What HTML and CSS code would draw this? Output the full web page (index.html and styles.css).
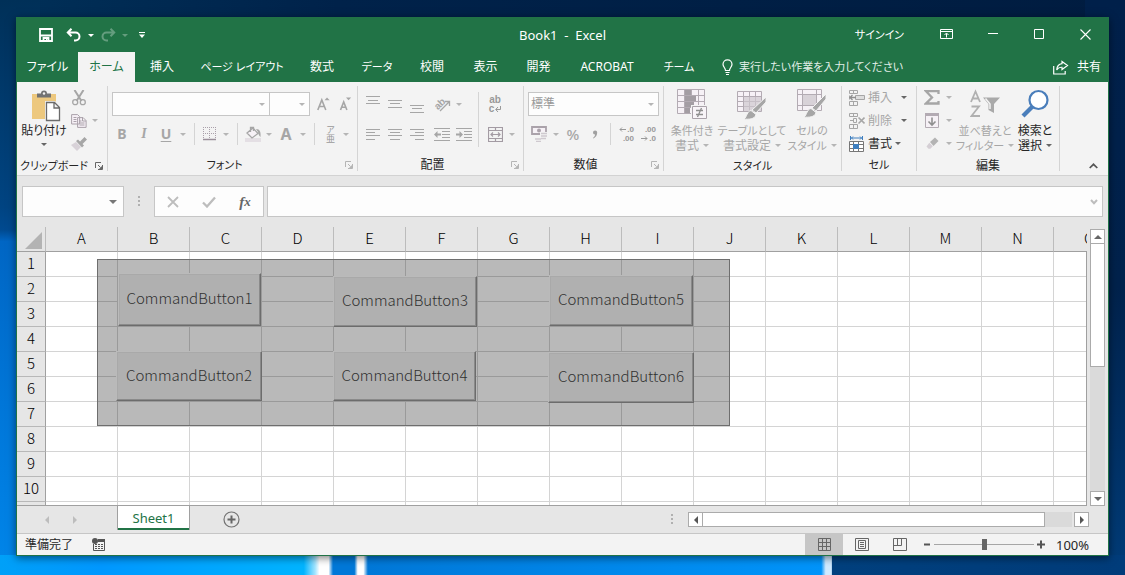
FILE: index.html
```html
<!DOCTYPE html>
<html lang="ja">
<head>
<meta charset="utf-8">
<title>Book1 - Excel</title>
<link rel="stylesheet" href="styles.css">
</head>
<body>
<div class="desktop">
<main class="window">
  <header class="titlebar">
    <div class="qat">
      <button class="qat-btn" aria-label="上書き保存"><svg width="14" height="14" viewBox="0 0 14 14"><path d="M1 1h12v12H1zM1 7.500h12M4.500 13v-3h5v3" fill="none" stroke="#fff" stroke-width="1.800"/><path d="M7 11h1.500v2H7z" fill="#fff"/></svg></button>
      <button class="qat-btn undo" aria-label="元に戻す"><svg width="16" height="14" viewBox="0 0 16 14"><path d="M2 4.500h7.500a4 4 0 0 1 0 8H8M5.500 .8 1.800 4.500l3.700 3.700" fill="none" stroke="#fff" stroke-width="2"/></svg></button>
      <button class="caret white" aria-label="元に戻すの一覧"></button>
      <button class="qat-btn faded" aria-label="やり直し"><svg width="16" height="14" viewBox="0 0 16 14"><path d="M14 4.500H6.500a4 4 0 0 0 0 8H8M10.500 .8l3.700 3.700-3.700 3.700" fill="none" stroke="#fff" stroke-width="2"/></svg></button>
      <button class="caret white faded" aria-label="やり直しの一覧"></button>
      <button class="qat-btn" aria-label="クイック アクセスのカスタマイズ"><svg width="6" height="6" viewBox="0 0 6 6"><path d="M0 .5h6" stroke="#fff"/><path d="M0 2.500h6L3 6z" fill="#fff"/></svg></button>
    </div>
    <h1 class="doc-title">Book1  -  Excel</h1>
    <div class="win-controls">
      <button class="signin kana">サインイン</button>
      <button class="win-btn" aria-label="リボンの表示オプション"><svg width="14" height="12" viewBox="0 0 14 12"><path d="M.5 1.500h12v9H.5zM.5 3.500h12M6.500 9.500v-4M4.500 7l2-2 2 2" fill="none" stroke="#fff"/></svg></button>
      <button class="win-btn" aria-label="最小化"><svg width="10" height="11" viewBox="0 0 10 11"><path d="M0 4.500h10" stroke="#fff"/></svg></button>
      <button class="win-btn" aria-label="最大化"><svg width="10" height="10" viewBox="0 0 10 10"><path d="M.5.5h9v9h-9z" fill="none" stroke="#fff"/></svg></button>
      <button class="win-btn" aria-label="閉じる"><svg width="11" height="11" viewBox="0 0 11 11"><path d="m.5.5 10 10M10.500.5l-10 10" stroke="#fff" stroke-width="1.100"/></svg></button>
    </div>
  </header>

  <nav class="tabs">
    <div class="tablist">
      <button class="tab">ファイル</button>
      <button class="tab active">ホーム</button>
      <button class="tab">挿入</button>
      <button class="tab kana">ページ レイアウト</button>
      <button class="tab">数式</button>
      <button class="tab kana">データ</button>
      <button class="tab">校閲</button>
      <button class="tab">表示</button>
      <button class="tab">開発</button>
      <button class="tab">ACROBAT</button>
      <button class="tab kana">チーム</button>
    </div>
    <button class="tellme kana"><svg width="11" height="17" viewBox="0 0 11 17"><path d="M3.500 11.500C3.500 9 1 8 1 5.300a4.500 4.500 0 0 1 9 0C10 8 7.500 9 7.500 11.500zM3.500 13.500h4M4 15.500h3" fill="none" stroke="#fff" stroke-width="1.200"/></svg>実行したい作業を入力してください</button>
    <button class="share"><svg width="16" height="15" viewBox="0 0 16 15"><path d="M.7 6v8h11.500v-3M9 1.500l5.500 4L9 9.500V7.300C6.500 7 5 8 3.700 10 4 6 6 4 9 3.700z" fill="none" stroke="#fff" stroke-width="1.200"/></svg>共有</button>
  </nav>

  <section class="ribbon">
    <div class="group clipboard">
      <div class="group-body">
        <button class="big on"><svg width="30" height="32" viewBox="0 0 30 32"><path d="M1 4h24v25H1z" fill="#edc87e"/><path d="M6 3.500h4a3 3 0 0 1 6 0h4v4H6z" fill="#737373"/><circle cx="13" cy="3.500" r="1.200" fill="#f3f3f3"/><path d="M14 11h10l5 5.500V31H14z" fill="#f3f3f3"/><path d="M15.500 12.500h8l5 5V30.500h-13zM23 12.500v5.500h5" fill="#fff" stroke="#6b6b6b" stroke-width="1.300"/></svg><span>貼り付け</span><i class="arrow"></i></button>
        <div class="stack">
          <div class="srow"><button class="tool" aria-label="切り取り"><svg width="14" height="16" viewBox="0 0 14 16"><path d="m2.500 0 7 11M11.500 0l-7 11" stroke="#a6a6a6" stroke-width="2"/><circle cx="3.200" cy="12.200" r="2.500" fill="none" stroke="#a6a6a6" stroke-width="1.300"/><circle cx="10.800" cy="12.200" r="2.500" fill="none" stroke="#a6a6a6" stroke-width="1.300"/></svg></button></div>
          <div class="srow"><button class="tool" aria-label="コピー"><svg width="16" height="14" viewBox="0 0 16 14"><path d="M.6.6h6l2 2V10h-8zM6.600 3.600h5.500l3 3v6.800H6.600zM11.500 3.600V7H15M2.500 3.500h3M2.500 5.500h3M2.500 7.500h3M8.500 7h2M8.500 9h5M8.500 11h5" fill="#f6f0f6" stroke="#aaa2aa"/></svg></button><button class="caret" aria-label="コピーの一覧"></button></div>
          <div class="srow"><button class="tool" aria-label="書式のコピー"><svg width="16" height="14" viewBox="0 0 16 14"><path d="m0 8 5-3 5 5-4 4z" fill="#d8d2d8"/><path d="m5 4 2-1.500 6 6L11 10.500zM9 4.500 13.500 0l2.500 2.500L11.500 7z" fill="#a6a6a6"/></svg></button></div>
        </div>
      </div>
      <div class="group-foot"><h2 class="kana">クリップボード</h2><button class="launch on" aria-label="クリップボードの詳細"><svg width="8" height="8" viewBox="0 0 8 8"><path d="M.5 6V.5H6M3 3l2.500 2.500M7.500 3v4.500H3" fill="none" stroke="currentColor"/><path d="M7 4v3H4z" fill="currentColor"/></svg></button></div>
    </div>

    <div class="group font">
      <div class="group-body col">
        <div class="trow combos">
          <span class="combo grow"><select aria-label="フォント" disabled><option></option></select></span><span class="combo size"><select aria-label="フォント サイズ" disabled><option></option></select></span>
          <button class="tool lead" aria-label="フォント サイズの拡大"><svg width="13" height="14" viewBox="0 0 13 14"><path d="m.8 13 4-10 4 10M2.200 9.500h5.200" fill="none" stroke="#a6a6a6" stroke-width="1.600"/><path d="M7.500 3.200h5.200L10 .5z" fill="#a6a6a6"/></svg></button>
          <button class="tool" aria-label="フォント サイズの縮小"><svg width="13" height="14" viewBox="0 0 13 14"><path d="m1.500 13 3.200-8 3.200 8M2.800 10.200h4" fill="none" stroke="#a6a6a6" stroke-width="1.600"/><path d="M7 .5h5.200L9.500 3.200z" fill="#a6a6a6"/></svg></button>
        </div>
        <div class="trow">
          <button class="tool letter bold">B</button><button class="tool letter italic">I</button><button class="tool letter under">U</button><button class="caret" aria-label="下線の種類"></button>
          <i class="sep"></i>
          <button class="tool narrow" aria-label="罫線"><svg width="14" height="14" viewBox="0 0 14 14"><path d="M.5 0v12M6.500 0v12M12.500 0v12M0 .5h13M0 6.500h13" stroke="#aaa0aa" stroke-dasharray="1 1"/><path d="M0 12.500h13" stroke="#9b909b" stroke-width="1.500"/></svg></button><button class="caret" aria-label="罫線の種類"></button>
          <i class="sep"></i>
          <button class="tool narrow" aria-label="塗りつぶしの色"><svg width="17" height="16" viewBox="0 0 17 16"><path d="M0 12h16v4H0z" fill="#e4dfe4"/><path d="m2 7 6-5 5 5.500-6 4.500zM5.500 6V1.500h3V5" fill="#f6f1f6" stroke="#a6a6a6" stroke-width="1.300"/><path d="M11 3c4 0 5 3 4.500 8C14 10 13.500 8 13 6z" fill="#a6a6a6"/></svg></button><button class="caret" aria-label="塗りつぶしの色の一覧"></button>
          <button class="tool letter fontcolor">A</button><button class="caret" aria-label="フォントの色の一覧"></button>
          <i class="sep"></i>
          <button class="tool narrow" aria-label="ふりがな"><span class="ruby">ア亜</span></button><button class="caret" aria-label="ふりがなの一覧"></button>
        </div>
      </div>
      <div class="group-foot"><h2 class="kana">フォント</h2><button class="launch" aria-label="フォントの詳細"><svg width="8" height="8" viewBox="0 0 8 8"><path d="M.5 6V.5H6M3 3l2.500 2.500M7.500 3v4.500H3" fill="none" stroke="currentColor"/><path d="M7 4v3H4z" fill="currentColor"/></svg></button></div>
    </div>

    <div class="group align">
      <div class="group-body">
        <div class="col">
          <div class="trow">
            <button class="tool" aria-label="上揃え"><svg width="14" height="18" viewBox="0 0 14 18"><path d="M0 1.500h14M2 5.500h10M0 8.500h14" stroke="#a6a6a6"/></svg></button><button class="tool" aria-label="上下中央揃え"><svg width="14" height="18" viewBox="0 0 14 18"><path d="M0 5.500h14M2 8.500h10M0 12.500h14" stroke="#a6a6a6"/></svg></button><button class="tool" aria-label="下揃え"><svg width="14" height="18" viewBox="0 0 14 18"><path d="M0 10.500h14M2 13.500h10M0 17.500h14" stroke="#a6a6a6"/></svg></button>
            <button class="tool shift" aria-label="方向"><svg class="orient" width="17" height="16" viewBox="0 0 17 16"><text class="ab-text" x="0" y="11" transform="rotate(-45 6 8)">ab</text><path d="m6 15 9-9M11 5.500h4.500V10" fill="none" stroke="#a6a6a6" stroke-width="1.300"/></svg></button><button class="caret" aria-label="方向の一覧"></button>
          </div>
          <div class="trow">
            <button class="tool" aria-label="左揃え"><svg width="14" height="12" viewBox="0 0 14 12"><path d="M0 1.500h14M0 4.500h9M0 7.500h14M0 11.500h9" stroke="#a6a6a6"/></svg></button><button class="tool" aria-label="中央揃え"><svg width="14" height="12" viewBox="0 0 14 12"><path d="M0 1.500h14M2 4.500h10M0 7.500h14M2 11.500h10" stroke="#a6a6a6"/></svg></button><button class="tool" aria-label="右揃え"><svg width="14" height="12" viewBox="0 0 14 12"><path d="M0 1.500h14M5 4.500h9M0 7.500h14M5 11.500h9" stroke="#a6a6a6"/></svg></button>
            <button class="tool shift" aria-label="インデントを減らす"><svg width="16" height="13" viewBox="0 0 16 13"><path d="M0 .5h16M8 3.500h8M8 6.500h8M8 9.500h8M0 12.500h16" stroke="#a6a6a6"/><path d="m0 6.500 3.500-3.500v2.500H7v2H3.500V10z" fill="#a6a6a6"/></svg></button><button class="tool" aria-label="インデントを増やす"><svg width="16" height="13" viewBox="0 0 16 13"><path d="M0 .5h16M8 3.500h8M8 6.500h8M8 9.500h8M0 12.500h16" stroke="#a6a6a6"/><path d="M7 6.500 3.500 3v2.500H0v2h3.500V10z" fill="#a6a6a6"/></svg></button>
          </div>
        </div>
        <i class="sep tall"></i>
        <div class="col">
          <div class="trow"><button class="tool wrap" aria-label="折り返して全体を表示する"><span>ab</span><span class="second">c<svg width="6" height="6" viewBox="0 0 6 6"><path d="M5.500 0v3.500H1M3 1 .7 3.500 3 6" fill="none" stroke="#999"/></svg></span></button></div>
          <div class="trow"><button class="tool" aria-label="セルを結合して中央揃え"><svg width="15" height="15" viewBox="0 0 15 15"><path d="M.5.5h14v14H.5zM.5 3.500h14M.5 11.500h14M7.500.5v3M7.500 11.500v3M3 7.500h9M5 5.500l-2 2 2 2M10 5.500l2 2-2 2" fill="none" stroke="#a39ba3" stroke-width="1.200"/></svg></button><button class="caret" aria-label="結合の一覧"></button></div>
        </div>
      </div>
      <div class="group-foot"><h2>配置</h2><button class="launch" aria-label="配置の詳細"><svg width="8" height="8" viewBox="0 0 8 8"><path d="M.5 6V.5H6M3 3l2.500 2.500M7.500 3v4.500H3" fill="none" stroke="currentColor"/><path d="M7 4v3H4z" fill="currentColor"/></svg></button></div>
    </div>

    <div class="group number">
      <div class="group-body col">
        <div class="trow combos"><span class="combo grow"><select aria-label="表示形式" disabled><option>標準</option></select></span></div>
        <div class="trow">
          <button class="tool" aria-label="通貨表示形式"><svg width="17" height="16" viewBox="0 0 17 16"><path d="M1 1h14v7H1z" fill="#f6f1f6" stroke="#aaa2aa" stroke-width="1.800"/><circle cx="8" cy="4.500" r="2" fill="#aaa2aa"/><path d="M9 6h7v8H9z" fill="#f3f3f3"/><path d="M10 7.500h6M10 10h6M10 12.500h5M4 13h6M5 15.500h5" stroke="#cfc9cf" stroke-width="1.500"/></svg></button><button class="caret" aria-label="通貨の一覧"></button><button class="tool percent">%</button><button class="tool" aria-label="桁区切り"><svg width="6" height="9" viewBox="0 0 6 9"><path d="M1 2.500A2 2 0 0 1 5.200 2.500C5.200 5 4 7 1.500 8.500L1 8C2.500 7 3 5.800 3 4.600A2 2 0 0 1 1 2.500z" fill="#a0a0a0"/></svg></button>
          <i class="sep close"></i>
          <button class="tool decimals" aria-label="小数点以下の表示桁数を増やす"><span><svg width="7" height="5" viewBox="0 0 7 5"><path d="M7 2.500H1M3 .5l-2 2 2 2" fill="none" stroke="#999"/></svg>.0</span><span>.00</span></button><button class="tool decimals" aria-label="小数点以下の表示桁数を減らす"><span>.00</span><span><svg width="7" height="5" viewBox="0 0 7 5"><path d="M0 2.500h6M4 .5l2 2-2 2" fill="none" stroke="#999"/></svg>.0</span></button>
        </div>
      </div>
      <div class="group-foot"><h2>数値</h2><button class="launch" aria-label="数値の詳細"><svg width="8" height="8" viewBox="0 0 8 8"><path d="M.5 6V.5H6M3 3l2.500 2.500M7.500 3v4.500H3" fill="none" stroke="currentColor"/><path d="M7 4v3H4z" fill="currentColor"/></svg></button></div>
    </div>

    <div class="group style">
      <div class="group-body">
        <button class="big"><svg width="30" height="31" viewBox="0 0 30 31"><path d="M.5.5h27v24H.5zM.5 6.500h27M.5 12.500h27M.5 18.500h27M7.500.5v24M14.500.5v24M21.500.5v24" fill="#f6f1f6" stroke="#b3abb3"/><path d="M8 1h6v5H8zM8 7h11v5H8zM8 13h9v5H8zM8 19h5v5H8z" fill="#a39da3"/><path d="M14 16h16v15H14z" fill="#f3f3f3"/><path d="M15.500 17.500h14v12h-14z" fill="#f8f4f8" stroke="#aaa2aa"/><path d="M19 21.500h7M19 25.500h7M24.500 19l-4 9" stroke="#8f8f8f" stroke-width="1.300"/></svg><span class="kana">条件付き</span><span>書式<i class="arrow"></i></span></button>
        <button class="big wide"><svg width="30" height="31" viewBox="0 0 30 31"><path d="M.5 2.500h24v20H.5zM.5 7.500h24M.5 12.500h24M.5 17.500h24M6.500 2.500v20M12.500 2.500v20M18.500 2.500v20" fill="#f6f1f6" stroke="#b3abb3"/><path d="M7 8h17v14H7z" fill="#cfc8cf" opacity=".7"/><path d="M29 8v5L19 24l-4-3z" fill="#a6a6a6" stroke="#f3f3f3"/><path d="M14 21.500l5 4c-1 5-8 5-12 4.500 3-2 3-8 7-8.500z" fill="#a6a6a6" stroke="#f3f3f3"/></svg><span class="kana">テーブルとして</span><span>書式設定<i class="arrow"></i></span></button>
        <button class="big"><svg width="30" height="31" viewBox="0 0 30 31"><path d="M.5.5h24v21H.5zM.5 5.500h24M.5 16.500h24M5.500.5v21M19.500.5v21" fill="#f6f1f6" stroke="#b3abb3"/><path d="M6 6h13v10H6z" fill="#d8d2d8"/><path d="M29 5v5L19 22l-4-3z" fill="#a6a6a6" stroke="#f3f3f3"/><path d="M14 19.500l5 4c-1 5-8 5-12 4.500 3-2 3-8 7-8.500z" fill="#a6a6a6" stroke="#f3f3f3"/></svg><span class="kana">セルの</span><span class="kana">スタイル<i class="arrow"></i></span></button>
      </div>
      <div class="group-foot"><h2 class="kana">スタイル</h2></div>
    </div>

    <div class="group cells">
      <div class="group-body">
        <div class="stack">
          <div class="srow"><button class="labelled"><svg width="16" height="16" viewBox="0 0 16 16"><path d="M.5.5h8v3h-8zM4.500.5v3M.5 11.500h8v4h-8zM4.500 11.500v4M.5 5.500v4" fill="none" stroke="#a6a6a6"/><path d="M6.500 5.500h9v4h-9z" fill="#ddd" stroke="#a6a6a6"/><path d="M1 7.500h6M3.500 5 1 7.500 3.500 10" fill="none" stroke="#8f8f8f" stroke-width="1.300"/></svg>挿入</button><button class="caret dark" aria-label="挿入の一覧"></button></div>
          <div class="srow"><button class="labelled"><svg width="16" height="16" viewBox="0 0 16 16"><path d="M.5.5h8v3h-8zM4.500.5v3M.5 11.500h8v4h-8zM4.500 11.500v4M1 7.500h3M4.500 5.500h3v4h-3z" fill="none" stroke="#a6a6a6"/><path d="m9.500 4.500 6 6M15.500 4.500l-6 6" stroke="#a6a6a6" stroke-width="1.600"/></svg>削除</button><button class="caret dark" aria-label="削除の一覧"></button></div>
          <div class="srow"><button class="labelled on"><svg width="16" height="16" viewBox="0 0 16 16"><path d="M1.500 0v4M13.500 0v4M2 2h11M4 .5 2.500 2 4 3.500M11 .5 12.500 2 11 3.500" fill="none" stroke="#3f7fbf"/><path d="M.5 5.500h14v10H.5zM.5 8.500h14M.5 12.500h14M4.500 5.500v10M9.500 5.500v10" fill="#fff" stroke="#777"/><path d="M4 8h6v5H4z" fill="#3f7fbf"/></svg>書式</button><button class="caret dark" aria-label="書式の一覧"></button></div>
        </div>
      </div>
      <div class="group-foot"><h2 class="kana">セル</h2></div>
    </div>

    <div class="group edit">
      <div class="group-body">
        <div class="stack">
          <div class="srow"><button class="tool" aria-label="オート SUM"><svg width="16" height="15" viewBox="0 0 16 15"><path d="M14.500 4V1.200H2L8 7.500l-6 6h12.500V11" fill="none" stroke="#a6a6a6" stroke-width="2.300"/></svg></button><button class="caret" aria-label="オート SUM の一覧"></button></div>
          <div class="srow"><button class="tool" aria-label="フィル"><svg width="14" height="15" viewBox="0 0 14 15"><path d="M.5.5h13v14H.5z" fill="#f6f1f6" stroke="#b3abb3"/><path d="M0 0h14v3H0z" fill="#b3abb3"/><path d="M7 4.500v7M3.500 8.500 7 12l3.500-3.500" fill="none" stroke="#909090" stroke-width="1.600"/></svg></button><button class="caret" aria-label="フィルの一覧"></button></div>
          <div class="srow"><button class="tool" aria-label="クリア"><svg width="13" height="13" viewBox="0 0 13 13"><path d="m4 5 5-4.500L12.500 4 7.500 9z" fill="#b3b3b3"/><path d="m3.300 5.700 3.500 3.600-2.500 2.500H2.500L.5 9.500z" fill="#d5cfd5"/></svg></button><button class="caret" aria-label="クリアの一覧"></button></div>
        </div>
        <button class="big sort"><svg width="30" height="31" viewBox="0 0 30 31"><path d="M1 13 5.500 2.500 10 13M2.500 9.500h6M1.500 17.500H9L1.500 27H10" fill="none" stroke="#b0b0b0" stroke-width="1.800"/><path d="M13 8.500h17l-6 6.500v9L18.500 21v-6z" fill="#a9a9a9"/><path d="m15.500 9.500 4.500 5.500v5" fill="none" stroke="#f3f3f3" stroke-width="1.500"/></svg><span class="kana">並べ替えと</span><span class="kana">フィルター<i class="arrow"></i></span></button>
        <button class="big on find"><svg width="30" height="31" viewBox="0 0 30 31"><circle cx="18.500" cy="11" r="9" fill="#fff" stroke="#4a7ebb" stroke-width="2.200"/><path d="M12.500 17.500 3 27" stroke="#4a7ebb" stroke-width="4.200"/></svg><span>検索と</span><span>選択<i class="arrow"></i></span></button>
      </div>
      <div class="group-foot"><h2>編集</h2></div>
    </div>
    <button class="collapse" aria-label="リボンを折りたたむ"><svg width="9" height="6" viewBox="0 0 9 6"><path d="m.7 5 3.800-3.700L8.300 5" fill="none" stroke="#555" stroke-width="1.700"/></svg></button>
  </section>

  <section class="formula-bar">
    <span class="namebox"><input type="text" aria-label="名前ボックス"></span>
    <i class="dots"></i>
    <div class="fx-buttons">
      <button aria-label="キャンセル"><svg width="12" height="12" viewBox="0 0 12 12"><path d="m1 1 10 10M11 1 1 11" stroke="#bdbdbd" stroke-width="1.800"/></svg></button>
      <button aria-label="入力"><svg width="14" height="12" viewBox="0 0 14 12"><path d="m1 6.500 4 4L13 1.500" fill="none" stroke="#bdbdbd" stroke-width="2.300"/></svg></button>
      <button class="fx" aria-label="関数の挿入">f<sub>x</sub></button>
    </div>
    <span class="formula"><input type="text" aria-label="数式バー"><svg width="8" height="6" viewBox="0 0 8 6"><path d="m1 1 3 3.200L7 1" fill="none" stroke="#bdbdbd" stroke-width="2"/></svg></span>
  </section>

  <section class="sheet-area">
    <div class="sheet">
      <table class="cells-table">
        <thead><tr><th class="corner"><svg width="17" height="17" viewBox="0 0 17 17"><path d="M17 0v17H0z" fill="#b3b3b3"/></svg></th><th>A</th><th>B</th><th>C</th><th>D</th><th>E</th><th>F</th><th>G</th><th>H</th><th>I</th><th>J</th><th>K</th><th>L</th><th>M</th><th>N</th><th>O</th></tr></thead>
        <tbody>
          <tr><th>1</th><td></td><td></td><td></td><td></td><td></td><td></td><td></td><td></td><td></td><td></td><td></td><td></td><td></td><td></td><td></td></tr>
          <tr><th>2</th><td></td><td></td><td></td><td></td><td></td><td></td><td></td><td></td><td></td><td></td><td></td><td></td><td></td><td></td><td></td></tr>
          <tr><th>3</th><td></td><td></td><td></td><td></td><td></td><td></td><td></td><td></td><td></td><td></td><td></td><td></td><td></td><td></td><td></td></tr>
          <tr><th>4</th><td></td><td></td><td></td><td></td><td></td><td></td><td></td><td></td><td></td><td></td><td></td><td></td><td></td><td></td><td></td></tr>
          <tr><th>5</th><td></td><td></td><td></td><td></td><td></td><td></td><td></td><td></td><td></td><td></td><td></td><td></td><td></td><td></td><td></td></tr>
          <tr><th>6</th><td></td><td></td><td></td><td></td><td></td><td></td><td></td><td></td><td></td><td></td><td></td><td></td><td></td><td></td><td></td></tr>
          <tr><th>7</th><td></td><td></td><td></td><td></td><td></td><td></td><td></td><td></td><td></td><td></td><td></td><td></td><td></td><td></td><td></td></tr>
          <tr><th>8</th><td></td><td></td><td></td><td></td><td></td><td></td><td></td><td></td><td></td><td></td><td></td><td></td><td></td><td></td><td></td></tr>
          <tr><th>9</th><td></td><td></td><td></td><td></td><td></td><td></td><td></td><td></td><td></td><td></td><td></td><td></td><td></td><td></td><td></td></tr>
          <tr><th>10</th><td></td><td></td><td></td><td></td><td></td><td></td><td></td><td></td><td></td><td></td><td></td><td></td><td></td><td></td><td></td></tr>
          <tr><th></th><td></td><td></td><td></td><td></td><td></td><td></td><td></td><td></td><td></td><td></td><td></td><td></td><td></td><td></td><td></td></tr>
        </tbody>
      </table>
      <div class="selection">
        <button class="cmd c1">CommandButton1</button>
        <button class="cmd c2">CommandButton2</button>
        <button class="cmd c3">CommandButton3</button>
        <button class="cmd c4">CommandButton4</button>
        <button class="cmd c5">CommandButton5</button>
        <button class="cmd c6">CommandButton6</button>
      </div>
    </div>
    <div class="vscroll">
      <button aria-label="上へスクロール"><svg width="8" height="4" viewBox="0 0 8 4"><path d="M0 4h8L4 0z" fill="#666"/></svg></button>
      <div class="vthumb"></div>
      <div class="track"></div>
      <button aria-label="下へスクロール"><svg width="8" height="4" viewBox="0 0 8 4"><path d="M0 0h8L4 4z" fill="#666"/></svg></button>
    </div>
  </section>

  <footer>
    <div class="sheetbar">
      <button class="nav" aria-label="前のシート"><svg width="4" height="8" viewBox="0 0 4 8"><path d="M4 0v8L0 4z" fill="#bdbdbd"/></svg></button>
      <button class="nav" aria-label="次のシート"><svg width="4" height="8" viewBox="0 0 4 8"><path d="M0 0v8l4-4z" fill="#bdbdbd"/></svg></button>
      <button class="sheet-tab">Sheet1</button>
      <button class="add" aria-label="新しいシート"><svg width="17" height="17" viewBox="0 0 17 17"><circle cx="8.500" cy="8.500" r="7.500" fill="none" stroke="#737373" stroke-width="1.200"/><path d="M8.500 4.500v8M4.500 8.500h8" stroke="#666" stroke-width="2"/></svg></button>
      <i class="dots"></i>
      <div class="hscroll">
        <button aria-label="左へスクロール"><svg width="4" height="8" viewBox="0 0 4 8"><path d="M4 0v8L0 4z" fill="#555"/></svg></button>
        <div class="hthumb"></div>
        <div class="track"></div>
        <button aria-label="右へスクロール"><svg width="4" height="8" viewBox="0 0 4 8"><path d="M0 0v8l4-4z" fill="#555"/></svg></button>
      </div>
    </div>
    <div class="statusbar">
      <span class="ready">準備完了</span>
      <button class="macro" aria-label="マクロの記録"><svg width="13" height="13" viewBox="0 0 13 13"><path d="M1.500 6v6.500h11v-11H6" fill="none" stroke="#555"/><path d="M6 1h7v3H6z" fill="#555"/><path d="M3 6.500h8M3 8.500h8M3 10.500h8" stroke="#555" stroke-dasharray="2 1"/><circle cx="3" cy="3" r="3" fill="#555"/></svg></button>
      <div class="views">
        <button class="active" aria-label="標準"><svg width="13" height="13" viewBox="0 0 13 13"><path d="M.5.5h12v12H.5zM.5 4.500h12M.5 8.500h12M4.500.5v12M8.500.5v12" fill="none" stroke="#666"/></svg></button>
        <button aria-label="ページ レイアウト"><svg width="14" height="13" viewBox="0 0 14 13"><path d="M.5.5h13v12H.5zM3.500 2.500h7v8h-7zM5 4.500h4M5 6.500h4M5 8.500h4" fill="none" stroke="#666"/></svg></button>
        <button aria-label="改ページ プレビュー"><svg width="14" height="13" viewBox="0 0 14 13"><path d="M.5.5h13v12H.5zM4.500.5v7M8.500.5v7M.5 7.500h8" fill="none" stroke="#666"/></svg></button>
      </div>
      <button class="zoom-btn" aria-label="縮小"><svg width="6" height="9" viewBox="0 0 6 9"><path d="M0 4.500h6" stroke="#555" stroke-width="2"/></svg></button>
      <input class="zoom" type="range" min="0" max="100" value="50" aria-label="ズーム">
      <button class="zoom-btn" aria-label="拡大"><svg width="8" height="9" viewBox="0 0 8 9"><path d="M0 4.500h8M4 .5v8" stroke="#555" stroke-width="2"/></svg></button>
      <span class="pct">100%</span>
    </div>
  </footer>
</main>
</div>
</body>
</html>
```
FILE: styles.css
```css
* { box-sizing: border-box; }

body {
  margin: 0;
  font: 12px/16px "Noto Sans", "Noto Sans CJK JP", sans-serif;
  font-feature-settings: "palt";
  color: #262626;
}

button, input, select {
  margin: 0;
  padding: 0;
  border: 0;
  background: none;
  color: inherit;
  font: inherit;
  font-feature-settings: inherit;
}

button {
  display: flex;
  align-items: center;
  justify-content: center;
  white-space: nowrap;
  flex: none;
}

svg { display: block; flex: none; }

/* Desktop wallpaper */
.desktop {
  display: flex;
  min-height: 100vh;
  padding: 17px 16px 19px;
  background:
    linear-gradient(90deg, #00a0f8 0, #0098ff 9%, #00b4ff 27%, #a0e4ff 28%, #fff 28.400%, #fff 29.200%, #0078d8 29.600%, #0078d8 31.500%, #fff 31.800%, #fff 32.300%, #0078d8 32.700%, #008cf0 60%, #0094fa 73%, #cfeaff 73.400%, #cfeaff 73.900%, #00407e 74%, #003c7a 100%) bottom / 100% 20px no-repeat,
    linear-gradient(180deg, #003058 0, #004482 36%, #004a90 40%, #0066c4 42%, #0076d8 70%, #0086ea 100%) left / 40px 100% no-repeat,
    linear-gradient(180deg, #00204a 0, #00224c 50%, #003c78 100%) right / 40px 100% no-repeat,
    linear-gradient(90deg, #003058 0, #00224a 30%, #001c40 100%);
}

.window {
  display: flex;
  flex: 1;
  flex-direction: column;
  min-width: 0;
  border: 1px solid #217346;
  background: #e6e6e6;
  box-shadow: 0 2px 8px rgba(0, 0, 0, .5);
}

/* Title bar */
.titlebar {
  display: grid;
  grid-template-columns: 1fr auto 1fr;
  height: 34px;
  background: #217346;
  color: #fff;
}

.qat { display: flex; align-items: center; padding-left: 18px; }
.qat-btn { width: 22px; height: 22px; }
.undo { margin-left: 6px; }
.faded { opacity: .3; }

.caret { width: 12px; height: 16px; color: #b5b5b5; }
.caret::after, .arrow {
  content: "";
  border: 3px solid transparent;
  border-top-color: currentColor;
  border-bottom: 0;
}
.caret.white { color: #fff; }
.caret.dark { color: #666; }

.doc-title { margin: 0; font-size: 13px; font-weight: 400; line-height: 34px; white-space: pre; }
.win-controls { display: flex; justify-content: flex-end; }
.signin { margin-right: 20px; }
.win-btn { width: 46px; height: 32px; }

/* Ribbon tabs */
.tabs { display: flex; height: 30px; background: #217346; color: #fff; }
.tablist { display: grid; grid-template-columns: 61px 57px 54px 106px 54px 56px 54px 53px 53px 84px 60px; }
.tab.active { background: #f3f3f3; color: #217346; }
.tellme { gap: 6px; padding-left: 13px; color: #e0eee6; }
.share { gap: 8px; margin-left: auto; padding-right: 7px; }

/* Ribbon */
.ribbon {
  display: flex;
  height: 94px;
  border-bottom: 1px solid #d2d2d2;
  background: #f3f3f3;
}
.group { position: relative; display: flex; flex-direction: column; padding: 4px 1px 0 0; }
.group::after {
  content: "";
  position: absolute;
  top: 4px;
  right: 0;
  bottom: 4px;
  width: 1px;
  background: #d4d4d4;
}
.clipboard { width: 91px; }
.font { width: 250px; }
.align { width: 166px; }
.number { width: 140px; }
.style { width: 178px; }
.cells { width: 75px; }
.edit { width: 143px; }

.group-body { display: flex; height: 70px; }
.col { display: flex; flex-direction: column; }
.group-foot { display: flex; height: 20px; align-items: center; }
.group-foot h2 { flex: 1; margin: 0; font-size: 12px; font-weight: 400; text-align: center; white-space: nowrap; }
.launch { width: 16px; height: 16px; color: #b5b5b5; }
.launch.on { color: #666; }

.trow { display: flex; align-items: center; height: 30px; padding-left: 3px; }
.trow:first-child { margin-top: 3px; }
.align .trow { padding-left: 4px; }
.number .trow { padding-left: 4px; }
.tool { width: 22px; height: 22px; color: #a6a6a6; }
.tool.narrow { width: 20px; }
.tool.shift { margin-left: 3px; }
.sep { width: 1px; height: 22px; margin: 0 5px; background: #d4d4d4; }
.sep.tall { height: 55px; margin: 6px 0 0; }
.sep.close { margin: 0 4px; }
.align .col + .sep { margin-left: 3px; }
.align .sep + .col .trow { padding-left: 5px; }

.letter { font-size: 14px; font-weight: 700; }
.italic { font-family: "Liberation Serif", serif; font-style: italic; }
.under { text-decoration: underline; text-underline-offset: 2px; }
.fontcolor { font-size: 16px; }
.ruby { color: #999; font-size: 9px; line-height: 12px; writing-mode: vertical-rl; }
.wrap, .decimals { flex-direction: column; color: #999; font-family: "Liberation Sans", sans-serif; font-weight: 700; }
.wrap { font-size: 10px; line-height: 9px; }
.decimals { align-items: flex-end; padding-right: 3px; font-size: 8px; line-height: 9px; }
.decimals span, .wrap .second { display: flex; align-items: center; gap: 1px; }
.percent { font-size: 15px; font-weight: 500; }
.orient { overflow: visible; }
.ab-text { fill: #a6a6a6; font: 700 10px "Liberation Sans", sans-serif; }

.combo { position: relative; height: 24px; border: 1px solid #c6c6c6; background: #fdfdfd; }
.combo::after, .namebox::after {
  content: "";
  position: absolute;
  top: 10px;
  right: 4px;
  border: 3px solid transparent;
  border-top-color: #b5b5b5;
  border-bottom: 0;
  pointer-events: none;
}
.combo select { width: 100%; height: 22px; padding-left: 2px; appearance: none; color: #999; opacity: 1; }
.combos { padding-right: 4px; }
.font .combos { padding-right: 1px; padding-left: 4px; }
.combo.grow { flex: 1; }
.combo.size { width: 41px; margin-left: -1px; }
.lead { margin-left: 2px; }

.big {
  display: flex;
  flex-direction: column;
  justify-content: flex-start;
  width: 52px;
  height: 70px;
  padding-top: 3px;
  color: #a6a6a6;
  line-height: 15px;
}
.big svg { margin-bottom: 3px; }
.big span { display: flex; align-items: center; }
.big .arrow { margin-left: 4px; color: #b5b5b5; }
.big.on { color: #262626; }
.big.on .arrow { color: #666; }
.big.wide { width: 68px; }
.style .group-body { padding-left: 2px; }
.clipboard .big > .arrow { margin: 5px 0 0; }
.clipboard .big { width: 54px; padding-top: 4px; }
.clipboard .big svg { margin: 0 0 1px 3px; }

.stack { display: flex; flex-direction: column; }
.srow { display: flex; align-items: center; height: 23px; }
.clipboard .tool { width: 16px; }
.clipboard .caret { margin-left: 2px; }
.edit .stack { padding-left: 4px; }
.edit .big.sort { width: 60px; }
.edit .big.find { width: 40px; }
.labelled { gap: 3px; padding-left: 7px; color: #a6a6a6; }
.labelled.on { color: #262626; }
.cells .caret { margin-left: 6px; }
.cells .labelled.on + .caret { margin-left: 0; }
.collapse { align-self: flex-end; width: 30px; height: 18px; margin-left: auto; }

.kana, .group-foot .kana { font-size: 11px; }

/* Formula bar */
.formula-bar { display: flex; align-items: center; height: 51px; padding: 0 5px; }
.namebox, .fx-buttons, .formula { height: 31px; border: 1px solid #c6c6c6; background: #fdfdfd; }
.namebox { position: relative; width: 102px; }
.namebox::after { top: 13px; right: 6px; border-width: 4px 4px 0; border-top-color: #777; }
.namebox input { width: 100%; height: 29px; }
.dots { width: 2px; height: 11px; margin: 0 14px; background: repeating-linear-gradient(#b0b0b0 0 2px, transparent 2px 4px); }
.fx-buttons { display: flex; width: 110px; }
.fx-buttons button { width: 36px; color: #666; }
.fx-buttons .fx { font: italic 700 15px/20px "Liberation Serif", serif; }
.fx sub { font-size: 13px; line-height: 12px; }
.formula { display: flex; flex: 1; align-items: center; margin-left: 3px; padding-right: 4px; }
.formula input { flex: 1; min-width: 0; height: 29px; }

/* Worksheet grid */
.sheet-area { display: flex; flex: 1; min-height: 0; }
.sheet {
  position: relative;
  flex: 1;
  height: 279px;
  min-width: 0;
  overflow: hidden;
  border-bottom: 1px solid #a0a0a0;
}
.sheet::after {
  content: "";
  position: absolute;
  top: 24px;
  right: 0;
  bottom: 0;
  width: 1px;
  background: #a0a0a0;
}
.cells-table { width: 1109px; border-spacing: 0; table-layout: fixed; background: #fff; }
.cells-table th, .cells-table td { height: 25px; padding: 0; border-right: 1px solid #d4d4d4; border-bottom: 1px solid #d4d4d4; }
.cells-table th { width: 72px; padding-bottom: 2px; background: #e6e6e6; color: #000; font: 300 15px/20px "Noto Sans CJK JP", sans-serif; }
.cells-table thead th { border-bottom-color: #a0a0a0; border-right-color: #bcbcbc; }
.cells-table tbody th { border-right-color: #a0a0a0; border-bottom-color: #b8b8b8; }
.cells-table .corner { width: 29px; padding: 2px 0 0 8px; }

/* Dimmed selection holding the six form buttons */
.selection {
  position: absolute;
  top: 32px;
  left: 80px;
  width: 633px;
  height: 167px;
  border: 1px solid #6e6e6e;
  background: rgba(10, 10, 10, .285);
}
.cmd {
  position: absolute;
  width: 144px;
  height: 51px;
  padding-bottom: 3px;
  border: 1px solid;
  border-color: #bababa #6c6c6c #6c6c6c #bababa;
  background: #b0b0b0;
  box-shadow: inset -1px -1px #8a8a8a, inset 1px 1px #a9a9a9;
  color: #303030;
  font: 300 15px/20px "Noto Sans CJK JP", sans-serif;
}
.c1 { top: 13px; left: 20px; width: 143px; height: 53px; }
.c2 { top: 91px; left: 18px; width: 146px; height: 50px; }
.c3 { top: 16px; left: 235px; }
.c4 { top: 91px; left: 235px; width: 143px; height: 50px; }
.c5 { top: 15px; left: 451px; }
.c6 { top: 92px; left: 450px; width: 146px; }

.vscroll { display: flex; flex-direction: column; width: 15px; margin: 2px 3px 0 3px; }
.vscroll button, .hscroll button { width: 15px; height: 15px; border: 1px solid #ababab; background: #fff; }
.vthumb { height: 123px; border: 1px solid #ababab; border-top: 0; background: #fff; }
.track { flex: 1; background: #dadada; }

/* Sheet tabs and horizontal scroll bar */
.sheetbar { display: flex; align-items: center; height: 27px; }
.nav { width: 28px; height: 20px; }
.nav:first-child { margin-left: 16px; }
.sheet-tab {
  align-self: flex-start;
  width: 73px;
  height: 25px;
  margin: -1px 0 0 28px;
  border: solid #a0a0a0;
  border-width: 0 1px;
  background: #fff;
  box-shadow: inset 0 -2px #217346;
  color: #217346;
  font-size: 13px;
}
.add { width: 17px; margin-left: 33px; }
.sheetbar .dots { margin: 0 15px 0 auto; }
.hscroll { display: flex; width: 401px; margin-right: 19px; }
.hthumb { width: 343px; height: 15px; margin-left: -1px; border: 1px solid #ababab; background: #fff; }
.hscroll .track { height: 15px; margin-right: 2px; }

/* Status bar */
.statusbar { display: flex; align-items: center; height: 22px; border-top: 1px solid #c6c6c6; background: #f3f3f3; }
.ready { padding-left: 8px; }
.macro { margin-left: 19px; }
.views { display: flex; margin: 0 3px 0 auto; }
.views button { width: 38px; height: 21px; }
.views .active { background: #c6c6c6; }
.zoom-btn { width: 10px; }
.zoom { width: 100px; height: 16px; margin: 0 2px; appearance: none; }
.zoom::-webkit-slider-runnable-track { height: 11px; background: linear-gradient(#a6a6a6, #a6a6a6) center / 100% 1px no-repeat; }
.zoom::-webkit-slider-thumb { width: 5px; height: 11px; appearance: none; background: #666; }
.pct { width: 33px; margin: 0 19px 0 10px; font-size: 13px; white-space: nowrap; }
```
